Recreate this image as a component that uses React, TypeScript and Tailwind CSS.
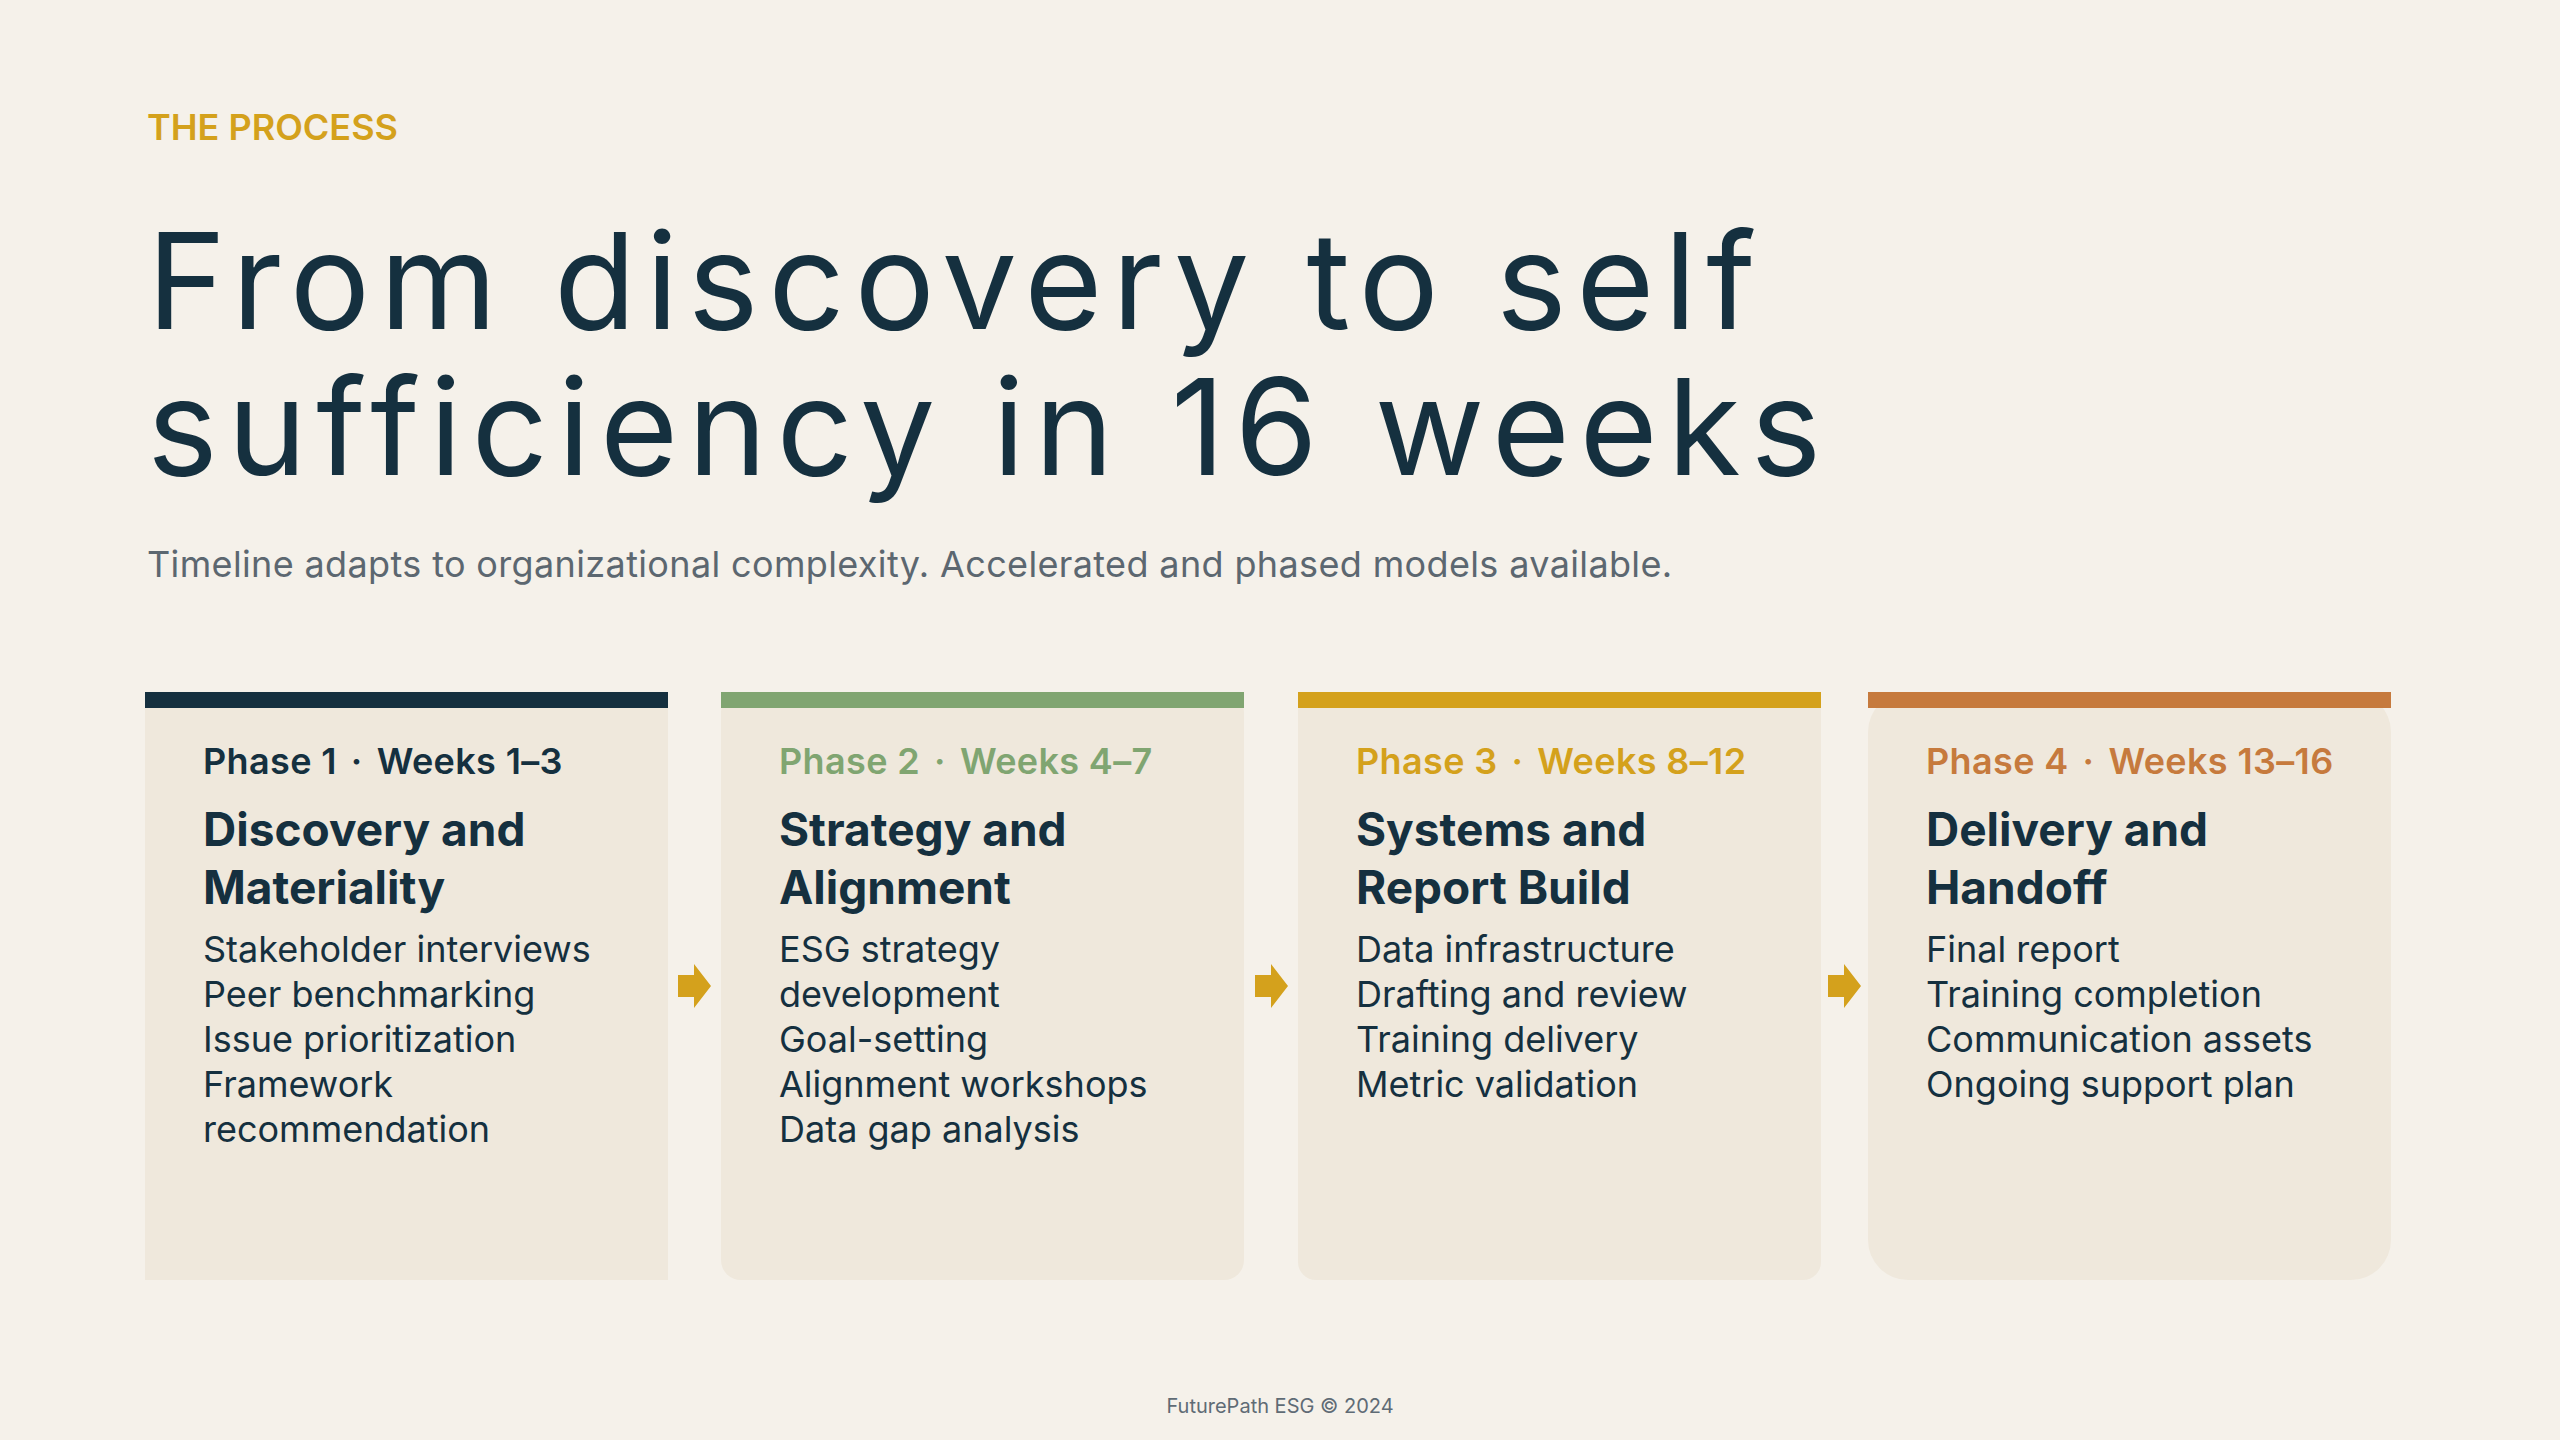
const phases = [
  {
    label: "Phase 1",
    weeks: "Weeks 1–3",
    title: "Discovery and Materiality",
    items: ["Stakeholder interviews", "Peer benchmarking", "Issue prioritization", "Framework recommendation"],
    bar: "bg-[#15303f]",
    text: "text-[#15303f]",
    radius: "rounded-none",
  },
  {
    label: "Phase 2",
    weeks: "Weeks 4–7",
    title: "Strategy and Alignment",
    items: ["ESG strategy development", "Goal-setting", "Alignment workshops", "Data gap analysis"],
    bar: "bg-[#80a571]",
    text: "text-[#80a571]",
    radius: "rounded-[20px]",
  },
  {
    label: "Phase 3",
    weeks: "Weeks 8–12",
    title: "Systems and Report Build",
    items: ["Data infrastructure", "Drafting and review", "Training delivery", "Metric validation"],
    bar: "bg-[#d4a11c]",
    text: "text-[#d4a11c]",
    radius: "rounded-[18px]",
  },
  {
    label: "Phase 4",
    weeks: "Weeks 13–16",
    title: "Delivery and Handoff",
    items: ["Final report", "Training completion", "Communication assets", "Ongoing support plan"],
    bar: "bg-[#c67a3d]",
    text: "text-[#c67a3d]",
    radius: "rounded-[40px]",
  },
];

const gaps = ["w-[53px]", "w-[54px]", "w-[47px]"];

function Arrow() {
  return (
    <svg width="33" height="44" viewBox="0 0 33 44" className="shrink-0">
      <path d="M0 11h16V0l17 22-17 22V33H0z" fill="#d4a11c" />
    </svg>
  );
}

function PhaseCard({ p }: { p: (typeof phases)[number] }) {
  return (
    <div className={`relative h-[588px] w-[523px] shrink-0 bg-[#efe8dc] ${p.radius}`}>
      {/* colour strip over the top edge */}
      <div className={`absolute inset-x-0 top-0 h-[16px] ${p.bar}`} />
      <div className="flex flex-col pl-[58px] pr-[40px] pt-[51px]">
        <div className={`flex items-center text-[36px] font-semibold leading-none tracking-[0.01em] ${p.text}`}>
          <span>{p.label}</span>
          <span className="mx-[14px]">·</span>
          <span>{p.weeks}</span>
        </div>
        <h3 className="mt-[21px] max-w-[380px] text-[46px] font-bold leading-[58px] text-[#15303f]">
          {p.title}
        </h3>
        <ul className="mt-[11px] text-[36px] leading-[45px] text-[#15303f]">
          {p.items.map((it) => (
            <li key={it}>{it}</li>
          ))}
        </ul>
      </div>
    </div>
  );
}

export default function App() {
  return (
    <div
      className="flex h-screen w-full flex-col bg-[#f5f1ea] pl-[147px]"
      style={{ fontFamily: "Inter, 'Noto Sans', sans-serif" }}
    >
      <div className="pt-[109px] text-[36px] font-semibold leading-none text-[#d4a11c]">
        THE PROCESS
      </div>
      <h1 className="mt-[62px] text-[134px] font-normal leading-[146px] tracking-[0.072em] text-[#15303f]">
        From discovery to self
        <br />
        sufficiency in 16 weeks
      </h1>
      <p className="mt-[47px] text-[36px] leading-none tracking-[0.01em] text-[#5c6770]">
        Timeline adapts to organizational complexity. Accelerated and phased models available.
      </p>

      <div className="-ml-[2px] mt-[110px] flex items-center">
        {phases.map((p, i) => (
          <div key={p.label} className="flex items-center">
            <PhaseCard p={p} />
            {i < gaps.length && (
              <div className={`flex shrink-0 justify-center ${gaps[i]}`}>
                <Arrow />
              </div>
            )}
          </div>
        ))}
      </div>

      <div className="mt-auto pb-[24px] pr-[147px] text-center text-[20px] leading-none text-[#5f6b75]">
        FuturePath ESG © 2024
      </div>
    </div>
  );
}
